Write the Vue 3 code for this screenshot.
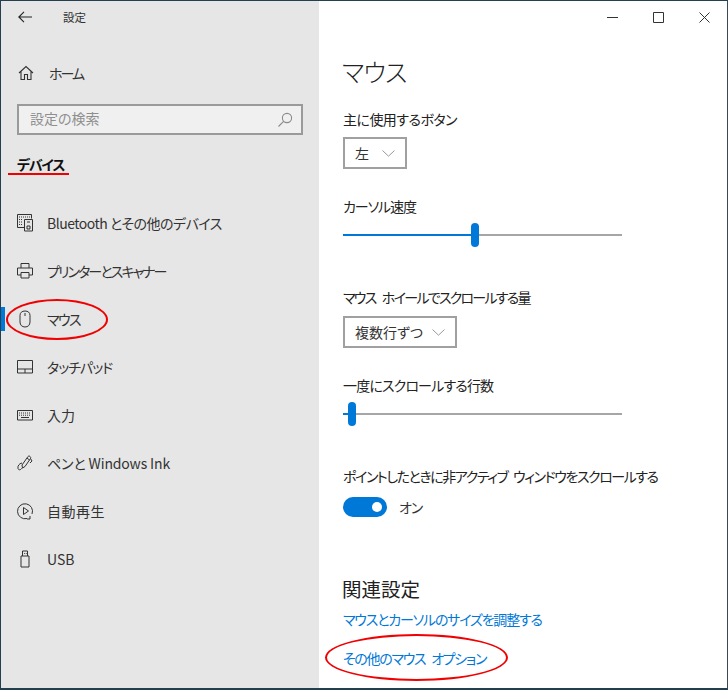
<script setup>
// spacing: カナが広がるので項目ごとに字間を詰める
const navItems = [
  { label: 'Bluetooth とその他のデバイス', icon: 'bluetooth', spacing: -0.5 },
  { label: 'プリンターとスキャナー', icon: 'printer', spacing: -1.9 },
  { label: 'マウス', icon: 'mouse', active: true, spacing: -1.6 },
  { label: 'タッチパッド', icon: 'touchpad', spacing: -1 },
  { label: '入力', icon: 'keyboard', spacing: 0 },
  { label: 'ペンと Windows Ink', icon: 'pen', spacing: -0.15 },
  { label: '自動再生', icon: 'autoplay', spacing: 0.5 },
  { label: 'USB', icon: 'usb', spacing: 0 },
];
</script>

<template>
  <div class="window">
    <aside class="sidebar">
      <div class="titlebar">
        <svg class="back" width="14" height="12" viewBox="0 0 14 12" fill="none" stroke="#222" stroke-width="1.1">
          <path d="M0.8 6H14M6 0.8L0.8 6L6 11.2" />
        </svg>
        <span class="app-title">設定</span>
      </div>

      <div class="home">
        <svg class="icon" width="16" height="16" viewBox="0 0 16 16" fill="none" stroke="#333" stroke-width="1.1">
          <path d="M1 8L8 1.5L15 8M3 6.5V14.5H6.5V9.5H9.5V14.5H13V6.5" />
        </svg>
        <span class="home-label">ホーム</span>
      </div>

      <div class="search">
        <span class="search-text">設定の検索</span>
        <svg width="16" height="16" viewBox="0 0 16 16" fill="none" stroke="#8a8a8a" stroke-width="1.1">
          <circle cx="10" cy="6" r="4.6" />
          <path d="M6.6 9.4L1.5 14.5" />
        </svg>
      </div>

      <div class="section-title">デバイス</div>

      <nav class="nav">
        <div v-for="item in navItems" :key="item.label" class="nav-item" :class="{ active: item.active }">
          <svg class="icon" width="16" height="18" viewBox="0 0 16 18" fill="none" stroke="#333" stroke-width="1">
            <template v-if="item.icon === 'bluetooth'">
              <path d="M7.5 13.5H0.5V0.5H14.5V4.5M7.5 5.5H15.5V17H7.5Z" />
              <path d="M2 3H13M2 5.5H6M2 8H6M2 10.5H6" stroke-dasharray="1 1" />
              <path d="M10 8H13M10 12H13V15H10Z" />
            </template>
            <template v-else-if="item.icon === 'printer'">
              <path d="M4 6V1.5H12V6M4 13H0.5V6H15.5V13H12M4 10.5H12V16H4Z" />
            </template>
            <template v-else-if="item.icon === 'mouse'">
              <path d="M3 5.5C3 2.5 5 1 8 1C11 1 13 2.5 13 5.5V12C13 15 11 17 8 17C5 17 3 15 3 12Z" />
              <path d="M8 3V6" />
            </template>
            <template v-else-if="item.icon === 'touchpad'">
              <path d="M0.5 2.5H15.5V15H0.5ZM0.5 11H15.5M8 11V15" />
            </template>
            <template v-else-if="item.icon === 'keyboard'">
              <path d="M0.5 4.5H15.5V14H0.5Z" />
              <path d="M2 7H14M2 9.2H14" stroke-dasharray="1 1" />
              <path d="M4 11.5H12" />
            </template>
            <template v-else-if="item.icon === 'pen'">
              <path d="M5 11L11 2.5C12 1.2 14.5 3 13.5 4.5L8 12.5L5.5 14Z" />
              <path d="M10 4L12.5 6M13.5 4.5L15 7L13 9" />
              <path d="M5 9C2 9.5 0.5 12 1 14.5C1.5 16.5 4 16 5 14" />
            </template>
            <template v-else-if="item.icon === 'autoplay'">
              <path d="M10 16.5A7.5 7.5 0 1 1 15 12" />
              <path d="M6.5 5.5L11.5 9L6.5 12.5Z" />
              <path d="M13 14V17H10" />
            </template>
            <template v-else-if="item.icon === 'usb'">
              <path d="M4 6H12V17H4ZM5.5 6V1H10.5V6" />
              <path d="M7 3.5H7.8M8.8 3.5H9.6" />
            </template>
          </svg>
          <span :style="{ letterSpacing: item.spacing + 'px' }">{{ item.label }}</span>
        </div>
      </nav>
    </aside>

    <main class="content">
      <div class="caption-buttons">
        <svg width="11" height="11" viewBox="0 0 11 11" stroke="#333" fill="none"><path d="M0 5.5H11" /></svg>
        <svg width="11" height="11" viewBox="0 0 11 11" stroke="#333" fill="none"><path d="M0.5 0.5H10.5V10.5H0.5Z" /></svg>
        <svg width="11" height="11" viewBox="0 0 11 11" stroke="#333" fill="none"><path d="M0.5 0.5L10.5 10.5M10.5 0.5L0.5 10.5" /></svg>
      </div>

      <h1>マウス</h1>

      <div class="label first">主に使用するボタン</div>
      <div class="select small">
        <span>左</span>
        <svg width="13" height="7" viewBox="0 0 13 7" fill="none" stroke="#999"><path d="M0.5 0.5L6.5 6.2L12.5 0.5" /></svg>
      </div>

      <div class="label speed">カーソル速度</div>
      <div class="slider">
        <div class="track-fill" :style="{ width: '132px' }"></div>
        <div class="thumb" :style="{ left: '128px' }"></div>
      </div>

      <div class="label wheel">マウス ホイールでスクロールする量</div>
      <div class="select">
        <span>複数行ずつ</span>
        <svg width="13" height="7" viewBox="0 0 13 7" fill="none" stroke="#999"><path d="M0.5 0.5L6.5 6.2L12.5 0.5" /></svg>
      </div>

      <div class="label lines">一度にスクロールする行数</div>
      <div class="slider">
        <div class="track-fill" :style="{ width: '6px' }"></div>
        <div class="thumb" :style="{ left: '5px' }"></div>
      </div>

      <div class="label inactive">ポイントしたときに非アクティブ ウィンドウをスクロールする</div>
      <div class="toggle-row">
        <div class="toggle"><div class="knob"></div></div>
        <span class="toggle-text">オン</span>
      </div>

      <h2>関連設定</h2>
      <a class="link">マウスとカーソルのサイズを調整する</a>
      <a class="link second">その他のマウス オプション</a>
    </main>

    <div class="mark underline"></div>
    <div class="mark ellipse-mouse"></div>
    <div class="mark ellipse-options"></div>
  </div>
</template>

<style>
html, body {
  margin: 0;
  background: #fff;
}
</style>

<style scoped>
.window {
  position: relative;
  display: flex;
  box-sizing: border-box;
  width: 728px;
  height: 690px;
  overflow: hidden;
  border: 1px solid #23404f;
  border-bottom-width: 2px;
  border-right-color: #3a4a52;
  background: #fff;
  font-family: "Noto Sans CJK JP", "Noto Sans", sans-serif;
  font-feature-settings: "palt";
  font-size: 14px;
  color: #222;
}

.sidebar {
  flex: 0 0 318px;
  background: #e6e6e6;
}

.titlebar {
  display: flex;
  align-items: center;
  height: 32px;
  padding-left: 17px;
}

.back {
  margin-right: 31px;
}

.app-title {
  font-size: 11.5px;
  color: #333;
}

.home {
  display: flex;
  align-items: center;
  height: 48px;
  margin-top: 16px;
  padding-left: 17px;
  color: #333;
}

.home-label {
  letter-spacing: -2px;
}

.icon {
  flex: none;
  margin-right: 15px;
}

.nav .icon {
  margin-right: 14px;
}

.search {
  display: flex;
  align-items: center;
  justify-content: space-between;
  box-sizing: border-box;
  width: 286px;
  height: 31px;
  margin: 7px 0 0 16px;
  padding: 0 8px 0 11px;
  border: 2px solid #9a9a9a;
  background: #f0f0f0;
  color: #8f8f8f;
}

.search-text {
  margin-top: -3px;
}

.section-title {
  margin: 19px 0 0 16px;
  height: 20px;
  line-height: 20px;
  font-weight: 700;
  letter-spacing: -1.3px;
  color: #111;
}

.nav {
  margin-top: 25px;
}

.nav-item {
  position: relative;
  display: flex;
  align-items: center;
  height: 48px;
  padding-left: 16px;
  color: #333;
}

.nav-item.active::before {
  content: "";
  position: absolute;
  left: 0;
  top: 12px;
  width: 4px;
  height: 24px;
  background: #0078d7;
}

.content {
  position: relative;
  flex: 1;
  padding: 0 0 0 24px;
}

.caption-buttons {
  position: absolute;
  top: 11px;
  right: 17px;
  display: flex;
  gap: 35px;
}

h1 {
  margin: 50px 0 0 -1px;
  height: 40px;
  font-size: 25px;
  font-weight: 300;
  letter-spacing: -1px;
  line-height: 40px;
  color: #222;
}

.label {
  height: 20px;
  line-height: 20px;
  color: #222;
}

.first { margin-top: 18px; letter-spacing: -0.55px; }
.speed { margin-top: 27px; letter-spacing: -1.1px; }
.wheel { margin-top: 51px; letter-spacing: -1.75px; word-spacing: 5px; }
.lines { margin-top: 27px; letter-spacing: -0.85px; }
.inactive { margin-top: 51px; letter-spacing: -1.45px; word-spacing: 4px; }

.select {
  display: inline-flex;
  align-items: center;
  gap: 9px;
  box-sizing: border-box;
  height: 32px;
  margin-top: 9px;
  padding: 0 10px;
  border: 2px solid #a0a0a0;
  background: #fff;
  color: #333;
}

.select.small {
  gap: 13px;
  margin-top: 8px;
}

.slider {
  position: relative;
  width: 279px;
  height: 2px;
  margin-top: 18px;
  margin-bottom: 10px;
  background: #a6a6a6;
}

.track-fill {
  height: 2px;
  background: #0078d7;
}

.thumb {
  position: absolute;
  top: -11px;
  width: 8px;
  height: 24px;
  border-radius: 4px;
  background: #0078d7;
}

.toggle-row {
  display: flex;
  align-items: center;
  gap: 12px;
  margin-top: 11px;
  color: #333;
}

.toggle-text {
  letter-spacing: -1px;
}

.toggle {
  position: relative;
  width: 44px;
  height: 20px;
  border-radius: 10px;
  background: #0078d7;
}

.knob {
  position: absolute;
  top: 5px;
  right: 5px;
  width: 10px;
  height: 10px;
  border-radius: 50%;
  background: #fff;
}

h2 {
  margin: 58px 0 0 -1px;
  height: 28px;
  font-size: 19.5px;
  font-weight: 400;
  line-height: 28px;
  color: #222;
}

.link {
  display: block;
  margin-top: 6px;
  height: 20px;
  line-height: 20px;
  letter-spacing: -1.2px;
  color: #0078d7;
}

.link.second {
  margin-top: 19px;
  letter-spacing: -1.3px;
  word-spacing: 4px;
}

.mark {
  position: absolute;
  box-sizing: border-box;
  pointer-events: none;
}

.underline {
  left: 7px;
  top: 172px;
  width: 61px;
  height: 2px;
  background: #f00000;
}

.ellipse-mouse {
  left: 5px;
  top: 298px;
  width: 102px;
  height: 41px;
  border: 2px solid #f00000;
  border-radius: 50%;
}

.ellipse-options {
  left: 324px;
  top: 633px;
  width: 183px;
  height: 47px;
  border: 2px solid #f00000;
  border-radius: 50%;
}
</style>
